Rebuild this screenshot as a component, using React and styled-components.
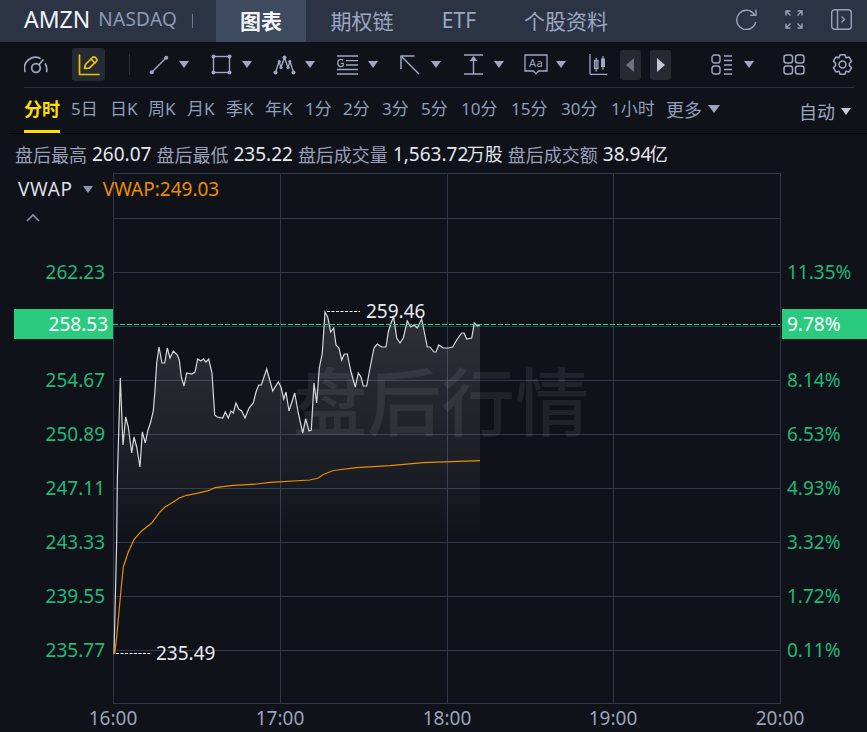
import React from 'react';
import styled, { createGlobalStyle } from 'styled-components';

const Global = createGlobalStyle`
  html, body { margin: 0; padding: 0; background: #0f1219; }
  * { box-sizing: border-box; }
`;

const Page = styled.div`
  width: 867px;
  height: 732px;
  overflow: hidden;
  background: #0f1219;
  font-family: "Noto Sans", "Noto Sans CJK SC", sans-serif;
  color: #9aa3bb;
`;

const Header = styled.header`
  height: 42px;
  display: flex;
  align-items: stretch;
  background: #2c3344;
`;

const Symbol = styled.div`
  width: 216px;
  padding: 0 0 3px 24px;
  display: flex;
  align-items: center;
  font-size: 23px;
  color: #f1f3f7;
  line-height: 1;
  span {
    margin-left: 8px;
    font-size: 19px;
    letter-spacing: 0.3px;
    color: #8d9ab5;
  }
  i {
    margin: 3px 0 0 15px;
    width: 1px;
    height: 14px;
    background: #6d7890;
  }
`;

const Tab = styled.div`
  width: ${p => p.$w}px;
  padding-bottom: 3px;
  display: flex;
  align-items: center;
  justify-content: center;
  font-size: 21px;
  font-weight: ${p => (p.$active ? 700 : 400)};
  color: ${p => (p.$active ? '#f4f6fa' : '#9aa7c0')};
  background: ${p => (p.$active ? '#3e4a5e' : 'transparent')};
`;

const HeaderIcons = styled.div`
  margin-left: auto;
  padding: 0 15px 3px 0;
  display: flex;
  align-items: center;
  gap: 28px;
  color: #8f9ab3;
`;

const Toolbar = styled.div`
  height: 46px;
  margin: 0 13px 0 24px;
  display: flex;
  align-items: center;
  border-bottom: 1px solid #2a2f3a;
  color: #a0a6c4;
`;

const ToolGroup = styled.div`
  width: ${p => p.$w}px;
  display: flex;
  align-items: center;
  gap: ${p => p.$gap || 10}px;
`;

const Caret = styled.span`
  width: 0;
  height: 0;
  border-left: ${p => (p.$s || 10) / 2}px solid transparent;
  border-right: ${p => (p.$s || 10) / 2}px solid transparent;
  border-top: ${p => (p.$s || 10) * 0.7}px solid ${p => p.$c || '#a0a6c4'};
  display: inline-block;
`;

const PenButton = styled.div`
  width: 33px;
  height: 33px;
  margin-left: 24px;
  border-radius: 3px;
  background: #262a33;
  display: flex;
  align-items: center;
  justify-content: center;
`;

const Divider = styled.i`
  width: 1px;
  height: 21px;
  margin: 0 19px 0 24px;
  background: #2a303b;
`;

const StepButton = styled.div`
  width: 21px;
  height: 30px;
  margin-right: ${p => p.$mr}px;
  border-radius: 3px;
  background: #262a33;
  display: flex;
  align-items: center;
  justify-content: center;
`;

const Periods = styled.div`
  height: 46px;
  margin-left: 9px;
  padding: 0 16px 0 15px;
  display: flex;
  align-items: center;
  border-bottom: 1px solid #000;
  font-size: 17px;
  color: #8d9dbc;
`;

const Period = styled.div`
  position: relative;
  width: ${p => p.$w}px;
  white-space: nowrap;
  line-height: 42px;
  height: 45px;
  color: ${p => (p.$active ? '#ffdf00' : 'inherit')};
  font-weight: ${p => (p.$active ? 700 : 400)};
  font-size: ${p => (p.$active ? 18 : 17)}px;
  ${p => p.$active && `
    &::after {
      content: '';
      position: absolute;
      left: 0;
      bottom: 0;
      width: 36px;
      height: 3px;
      background: #ffdf00;
    }
  `}
`;

const More = styled.div`
  display: flex;
  align-items: center;
  gap: 6px;
  height: 45px;
  padding-bottom: 3px;
  font-size: 18px;
`;

const Auto = styled(More)`
  margin-left: auto;
  color: #9aa7c0;
  padding-top: 4px;
`;

const Stats = styled.div`
  height: 39px;
  padding-left: 15px;
  display: flex;
  align-items: center;
  gap: 5px;
  font-size: 18px;
  color: #98a0b8;
  white-space: nowrap;
  b {
    font-weight: 400;
    font-size: 19px;
    color: #e6e8ee;
  }
  u {
    margin-left: -1.5px;
    font-size: 18px;
    text-decoration: none;
  }
`;

const ChartArea = styled.div`
  position: relative;
  height: 559px;
  svg { display: block; }
`;

const Legend = styled.div`
  position: absolute;
  left: 18px;
  top: 3px;
  display: flex;
  align-items: center;
  gap: 10px;
  font-size: 19px;
  line-height: 26px;
  color: #dcdfe6;
  span:first-child {
    letter-spacing: 0.7px;
  }
  em {
    font-style: normal;
    color: #ea8d00;
  }
`;

const Collapse = styled.div`
  position: absolute;
  left: 26px;
  top: 40px;
  line-height: 0;
`;

const Gauge = () => (
  <svg width="24" height="20" viewBox="0 0 24 20" fill="none" stroke="#a0a6c4" strokeWidth="1.7" strokeLinecap="round">
    <path d="M1 16.5 A11 11 0 0 1 16 3.2" />
    <path d="M22.6 16.5 A11 11 0 0 0 21.4 9" />
    <circle cx="12" cy="13" r="4.3" />
    <path d="M15 9.8 L19 5" />
  </svg>
);

const Pen = () => (
  <svg width="22" height="22" viewBox="0 0 22 22" fill="none" stroke="#e7c50a" strokeWidth="1.7" strokeLinejoin="round" strokeLinecap="round">
    <path d="M1.5 1 V20.5 H21" />
    <path d="M6.5 14.5 L7.5 10.5 L14.5 3.5 Q15.8 2.4 17 3.3 L18.6 4.9 Q19.5 6.2 18.4 7.4 L11.2 14.2 Z" />
    <path d="M13 5 L17 9" />
  </svg>
);

const LineTool = () => (
  <svg width="20" height="20" viewBox="0 0 20 20" fill="#a0a6c4" stroke="#a0a6c4">
    <path d="M2.5 17.5 L17.5 2.5" strokeWidth="1.4" />
    <circle cx="2.8" cy="17.2" r="2" stroke="none" />
    <circle cx="17.2" cy="2.8" r="2" stroke="none" />
  </svg>
);

const RectTool = () => (
  <svg width="21" height="21" viewBox="0 0 21 21" fill="#a0a6c4" stroke="none">
    <rect x="2.5" y="2.5" width="16" height="16" fill="none" stroke="#a0a6c4" strokeWidth="1.4" />
    <circle cx="2.5" cy="2.5" r="2" />
    <circle cx="18.5" cy="2.5" r="2" />
    <circle cx="2.5" cy="18.5" r="2" />
    <circle cx="18.5" cy="18.5" r="2" />
  </svg>
);

const PeaksTool = () => (
  <svg width="23" height="20" viewBox="0 0 23 20" fill="#a0a6c4">
    <path d="M2.5 17.5 L6 6.5 L8 12.5 L11.5 2.5 L15 12.5 L17 6.5 L20.5 17.5" fill="none" stroke="#a0a6c4" strokeWidth="1.4" />
    <circle cx="2.5" cy="17.5" r="2" />
    <circle cx="6.3" cy="6.5" r="1.6" />
    <circle cx="8" cy="12.5" r="1.6" />
    <circle cx="11.5" cy="2.5" r="2" />
    <circle cx="15" cy="12.5" r="1.6" />
    <circle cx="16.8" cy="6.5" r="1.6" />
    <circle cx="20.5" cy="17.5" r="2" />
  </svg>
);

const FibTool = () => (
  <svg width="21" height="20" viewBox="0 0 21 20" fill="none" stroke="#a0a6c4" strokeWidth="1.4">
    <path d="M0 1 H21 M9 5.6 H21 M9 10 H21 M0 14.5 H21 M0 19 H21" />
    <path d="M6.2 5.4 Q5 4.3 3.6 4.4 Q0.8 4.7 0.8 8 Q0.8 11.4 3.6 11.6 Q5 11.6 6.2 10.7 V8.4 H3.8" strokeWidth="1.3" />
  </svg>
);

const ArrowTool = () => (
  <svg width="20" height="20" viewBox="0 0 20 20" fill="none" stroke="#a0a6c4" strokeWidth="1.5">
    <path d="M1.5 1.5 L19 19" />
    <path d="M1 14 V1 H14.5" />
  </svg>
);

const HeightTool = () => (
  <svg width="19" height="21" viewBox="0 0 19 21" fill="none" stroke="#a0a6c4" strokeWidth="1.4">
    <path d="M0 1 H19 M0 20 H19 M9.5 6 V20" />
    <path d="M9.5 2 L13.5 7 H5.5 Z" fill="#a0a6c4" stroke="none" />
  </svg>
);

const NoteTool = () => (
  <svg width="24" height="21" viewBox="0 0 24 21" fill="none" stroke="#a0a6c4" strokeWidth="1.3">
    <path d="M1 1 H23 V17 H14.5 L12 19.6 L9.5 17 H1 Z" />
    <text x="12" y="13" textAnchor="middle" fontSize="11" fill="#a0a6c4" stroke="none" letterSpacing="0.5" fontFamily="Noto Sans">Aa</text>
  </svg>
);

const CandleTool = () => (
  <svg width="18" height="21" viewBox="0 0 18 21" fill="none" stroke="#a0a6c4" strokeWidth="1.3">
    <path d="M1 0 V19.5 Q1 20.3 2 20.3 H18" />
    <rect x="5.5" y="6.5" width="3.4" height="8" />
    <path d="M7.2 4 V17.5 M14 2 V15.5" />
    <rect x="12" y="4.5" width="4" height="8.5" fill="#a0a6c4" stroke="none" />
  </svg>
);

const StepArrow = ({ dir, color }) => (
  <svg width="9" height="14" viewBox="0 0 9 14" fill={color}>
    <path d={dir === 'left' ? 'M8 0 V14 L0 7 Z' : 'M1 0 V14 L9 7 Z'} />
  </svg>
);

const ListTool = () => (
  <svg width="22" height="21" viewBox="0 0 22 21" fill="none" stroke="#a0a6c4" strokeWidth="1.4">
    <rect x="1" y="1" width="8" height="8" rx="2.5" />
    <rect x="1" y="12" width="8" height="8" rx="2.5" />
    <path d="M13 2 H21 M13 6.5 H21 M13 11 H21 M13 15.5 H21 M13 20 H21" />
  </svg>
);

const GridTool = () => (
  <svg width="22" height="21" viewBox="0 0 22 21" fill="none" stroke="#a0a6c4" strokeWidth="1.5">
    <rect x="1" y="1" width="8.5" height="8" rx="2.5" />
    <rect x="12.5" y="1" width="8.5" height="8" rx="2.5" />
    <rect x="1" y="12" width="8.5" height="8" rx="2.5" />
    <rect x="12.5" y="12" width="8.5" height="8" rx="2.5" />
  </svg>
);

const GearTool = () => (
  <svg width="23" height="23" viewBox="0 0 24 24" fill="none" stroke="#a0a6c4" strokeWidth="1.6" strokeLinejoin="round">
    <path d="M9.5 1.8 H14.5 L15.6 4.9 L18.9 4.2 L21.4 8.5 L19.2 11 V13 L21.4 15.5 L18.9 19.8 L15.6 19.1 L14.5 22.2 H9.5 L8.4 19.1 L5.1 19.8 L2.6 15.5 L4.8 13 V11 L2.6 8.5 L5.1 4.2 L8.4 4.9 Z" />
    <circle cx="12" cy="12" r="3.6" />
  </svg>
);

const Refresh = () => (
  <svg width="22" height="21" viewBox="0 0 22 21" fill="none" stroke="#98a3bb" strokeWidth="1.4" strokeLinecap="round">
    <path d="M19.3 5.5 A9.6 9.6 0 1 0 20.6 13.5" />
    <path d="M21 1 V6.3 H15.7" strokeLinejoin="round" />
  </svg>
);

const Expand = () => (
  <svg width="18" height="19" viewBox="0 0 18 19" fill="none" stroke="#98a3bb" strokeWidth="1.4">
    <path d="M1 5.5 V1 H5.5 M1 1 L5.5 5.5 M12.5 1 H17 V5.5 M17 1 L12.5 5.5 M1 13.5 V18 H5.5 M1 18 L5.5 13.5 M17 13.5 V18 H12.5 M17 18 L12.5 13.5" />
  </svg>
);

const SidePanel = () => (
  <svg width="21" height="21" viewBox="0 0 21 21" fill="none" stroke="#98a3bb" strokeWidth="1.4">
    <rect x="0.7" y="0.7" width="19.6" height="19.6" rx="3" />
    <path d="M6.5 0.7 V20.3" />
    <path d="M10.5 7.5 L13.5 10.5 L10.5 13.5" />
  </svg>
);

const PRICE = [
  [114, 654], [116.7, 540], [117.3, 480], [120.3, 378], [123, 445], [125.7, 417], [128.3, 427], [131.7, 453],
  [134, 437], [136.7, 447], [140, 467], [142.3, 432], [145.3, 443], [148, 430], [150.7, 422], [153.3, 411],
  [155, 390], [156.7, 363], [159, 347], [162, 363], [164.7, 363], [167.3, 348], [170, 358], [173.3, 351],
  [177.3, 355], [179.3, 360], [181.3, 377], [184, 386], [186.7, 373], [191.7, 374], [195, 372], [197.7, 359],
  [200.7, 361], [203.3, 359], [206, 362], [208.7, 359], [212, 373], [214.7, 415], [217.3, 417], [222.7, 418],
  [225.3, 412], [228.3, 418], [231, 411], [233.3, 413], [236, 403], [238.7, 409], [241.7, 411], [245, 418],
  [249, 408], [253.3, 403], [256, 392], [258.7, 385], [261.3, 385], [266.7, 369], [272.7, 391], [278.3, 382],
  [281, 387], [283.7, 399], [286, 392], [289, 411], [294.7, 393], [298.3, 413], [302.7, 433], [305.7, 419],
  [309, 431], [311.3, 430], [314, 383], [316.7, 403], [319.3, 368], [322.3, 353], [325, 312], [327.7, 317],
  [330.7, 332], [333.7, 328], [336, 345], [339, 348], [341.7, 360], [344.3, 354], [347.3, 354], [351, 372],
  [355.3, 387], [358.3, 373], [361, 377], [363.3, 386], [366.7, 386], [370, 368], [374, 348], [377.3, 344],
  [381.7, 347], [386, 347], [388.3, 332], [391, 323], [393.7, 317], [396.7, 338], [400, 343], [403.3, 338],
  [407.3, 321], [410.7, 327], [414, 325], [417.3, 328], [421.7, 319], [427.3, 347], [430, 347], [434, 352],
  [436, 352], [438.7, 345], [443.3, 348], [448.3, 348], [452.7, 347], [456.7, 340], [461.7, 333], [464, 333],
  [466.7, 339], [471.7, 338], [474.3, 323], [477.3, 326], [480, 325],
];

const VWAP = [
  [114.7, 654], [116.7, 637], [120.7, 593], [123.3, 567], [128.3, 552], [134.3, 539], [141.7, 531], [151.7, 523],
  [160, 512], [165, 507], [171.7, 503], [179.3, 498], [186.7, 495.3], [196.7, 493.3], [208.3, 490.7], [215, 487.7],
  [233.3, 485.3], [256.7, 484], [270, 482.3], [310, 480], [318.3, 478], [323.3, 474.5], [333.3, 470.5], [356.7, 467.7],
  [390, 465.7], [423.3, 462.7], [480, 460.7],
];

const toPath = pts => pts.map((p, i) => `${i ? 'L' : 'M'}${p[0]} ${p[1]}`).join(' ');

const H_LINES = [218, 272, 326, 380, 434, 488, 542, 596, 650];
const V_LINES = [113, 280, 447, 613, 780];
const LEFT = [
  ['262.23', 272], ['254.67', 380], ['250.89', 434], ['247.11', 488],
  ['243.33', 542], ['239.55', 596], ['235.77', 650],
];
const RIGHT = [
  ['11.35%', 272], ['8.14%', 380], ['6.53%', 434], ['4.93%', 488],
  ['3.32%', 542], ['1.72%', 596], ['0.11%', 650],
];
const TIMES = ['16:00', '17:00', '18:00', '19:00', '20:00'];

const Chart = () => (
  <svg width="867" height="559" viewBox="0 173 867 559" fontFamily='"Noto Sans", "Noto Sans CJK SC", sans-serif' fontSize="19">
    <defs>
      <linearGradient id="area" x1="0" y1="0" x2="0" y2="1">
        <stop offset="0" stopColor="#fff" stopOpacity="0.13" />
        <stop offset="0.4" stopColor="#fff" stopOpacity="0.05" />
        <stop offset="0.6" stopColor="#fff" stopOpacity="0" />
      </linearGradient>
    </defs>
    <g stroke="#303948" strokeWidth="1" shapeRendering="crispEdges">
      <path d="M113 173.5 H780" />
      {H_LINES.map(y => <path key={y} d={`M113 ${y + 0.5} H780`} />)}
      <path d="M113 703.5 H780" />
      {V_LINES.map(x => <path key={x} d={`M${x + 0.5} 173 V704`} />)}
    </g>
    <text x="293" y="430" fontSize="74" fill="#ffffff" fillOpacity="0.075" fontWeight="500">盘后行情</text>
    <path d={`${toPath(PRICE)} L480 704 L114 704 Z`} fill="url(#area)" />
    <path d={toPath(PRICE)} fill="none" stroke="#d6d8dc" strokeWidth="1.2" />
    <path d={toPath(VWAP)} fill="none" stroke="#ea8d00" strokeWidth="1.2" />
    <path d="M113 324.5 H780" stroke="#22d57f" strokeWidth="1" strokeDasharray="5 2" shapeRendering="crispEdges" />

    <path d="M327 311.5 H360" stroke="#fff" strokeDasharray="3 1.5" />
    <text x="366" y="318" fill="#e8eaee">259.46</text>
    <path d="M116 653.5 H150" stroke="#fff" strokeDasharray="3 1.5" />
    <text x="156" y="660" fill="#e8eaee">235.49</text>

    {LEFT.map(([t, y]) => <text key={t} x="105" y={y + 7} textAnchor="end" fill="#1fb978">{t}</text>)}
    {RIGHT.map(([t, y]) => <text key={t} x="787" y={y + 7} fill="#1fb978">{t}</text>)}

    <rect x="14" y="309" width="99" height="30" fill="#2bcb7f" />
    <text x="108" y="331" textAnchor="end" fill="#fff">258.53</text>
    <rect x="782" y="309" width="85" height="30" fill="#2bcb7f" />
    <text x="787" y="331" fill="#fff">9.78%</text>

    {TIMES.map((t, i) => <text key={t} x={V_LINES[i]} y="725" textAnchor="middle" fill="#9aa3bb">{t}</text>)}
  </svg>
);

const TOOLS = [
  [LineTool, 62], [RectTool, 62], [PeaksTool, 64, 9], [FibTool, 63], [ArrowTool, 64, 11], [HeightTool, 60, 11], [NoteTool, 65, 8],
];

const PERIODS = [
  ['5日', 39], ['日K', 38], ['周K', 39], ['月K', 39], ['季K', 39], ['年K', 40], ['1分', 38], ['2分', 39], ['3分', 39],
  ['5分', 40], ['10分', 50], ['15分', 50], ['30分', 50], ['1小时', 55],
];

export default function App() {
  return (
    <Page>
      <Global />
      <Header>
        <Symbol>AMZN<span>NASDAQ</span><i /></Symbol>
        <Tab $w={90} $active>图表</Tab>
        <Tab $w={112}>期权链</Tab>
        <Tab $w={82}>ETF</Tab>
        <Tab $w={132}>个股资料</Tab>
        <HeaderIcons>
          <Refresh />
          <Expand />
          <SidePanel />
        </HeaderIcons>
      </Header>

      <Toolbar>
        <Gauge />
        <PenButton><Pen /></PenButton>
        <Divider />
        {TOOLS.map(([Icon, w, gap], i) => (
          <ToolGroup key={i} $w={w} $gap={gap}>
            <Icon />
            <Caret />
          </ToolGroup>
        ))}
        <ToolGroup $w={31}><CandleTool /></ToolGroup>
        <StepButton $mr={9}><StepArrow dir="left" color="#6d7280" /></StepButton>
        <StepButton $mr={40}><StepArrow dir="right" color="#c3c7d6" /></StepButton>
        <ToolGroup $w={72} $gap={11}><ListTool /><Caret /></ToolGroup>
        <ToolGroup $w={48}><GridTool /></ToolGroup>
        <GearTool />
      </Toolbar>

      <Periods>
        <Period $w={47} $active>分时</Period>
        {PERIODS.map(([t, w]) => <Period key={t} $w={w}>{t}</Period>)}
        <More>更多<Caret $s={12} $c="#9aa7c0" /></More>
        <Auto>自动<Caret $s={10} $c="#c5cad6" /></Auto>
      </Periods>

      <Stats>
        盘后最高 <b>260.07</b> 盘后最低 <b>235.22</b> 盘后成交量 <b>1,563.72<u>万股</u></b> 盘后成交额 <b>38.94<u>亿</u></b>
      </Stats>

      <ChartArea>
        <Chart />
        <Legend><span>VWAP</span><Caret $c="#8f95b3" /><em>VWAP:249.03</em></Legend>
        <Collapse>
          <svg width="14" height="9" viewBox="0 0 14 9" fill="none" stroke="#8f95a8" strokeWidth="1.6">
            <path d="M1 8 L7 2 L13 8" />
          </svg>
        </Collapse>
      </ChartArea>
    </Page>
  );
}
